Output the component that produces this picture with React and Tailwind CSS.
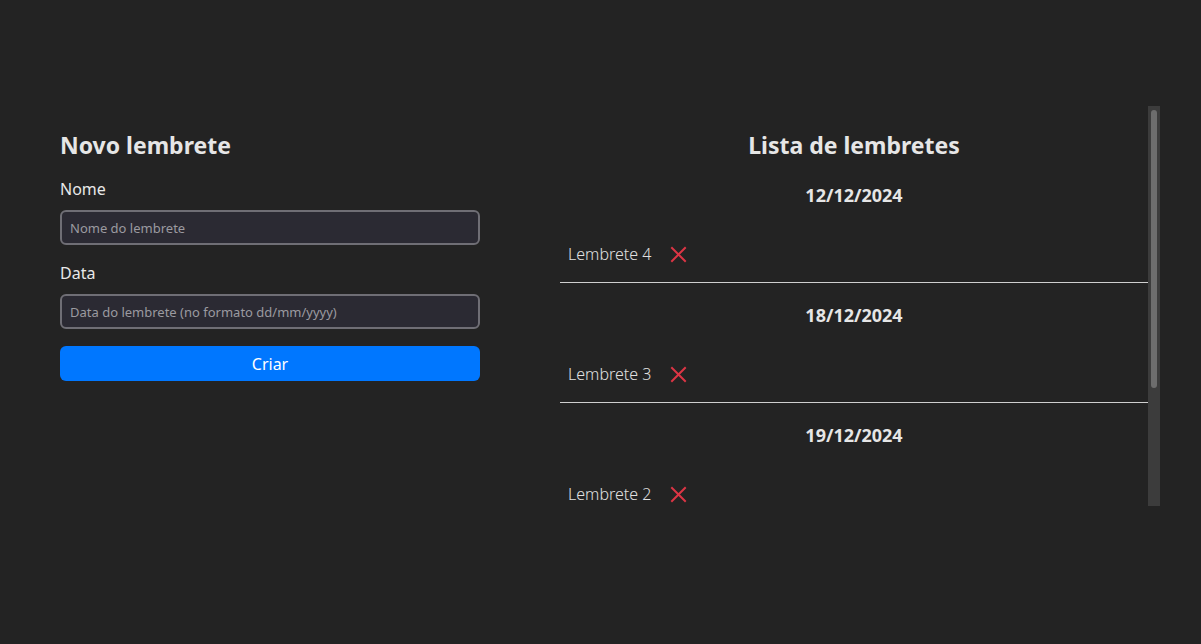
import React, { useState } from 'react';

const fontStack = { fontFamily: '"Noto Sans", "Open Sans", sans-serif' };

const initial = [
  { id: 4, name: 'Lembrete 4', date: '12/12/2024' },
  { id: 3, name: 'Lembrete 3', date: '18/12/2024' },
  { id: 2, name: 'Lembrete 2', date: '19/12/2024' },
];

const XIcon = () => (
  <svg width="17" height="17" viewBox="0 0 17 17" fill="none" stroke="#dc3545" strokeWidth="2" strokeLinecap="square">
    <path d="M2 2 L15 15 M15 2 L2 15" />
  </svg>
);

const App = () => {
  const [reminders, setReminders] = useState(initial);
  const [name, setName] = useState('');
  const [date, setDate] = useState('');

  const removeReminder = (id) => setReminders(reminders.filter((r) => r.id !== id));

  const createReminder = () => {
    if (!name || !date) return;
    setReminders([...reminders, { id: Date.now(), name, date }]);
    setName('');
    setDate('');
  };

  return (
    <div className="min-h-screen w-full bg-[#232323] text-[#e8e8e8] flex gap-[80px] pl-[60px] pt-[106px]" style={fontStack}>
      {/* Form */}
      <div className="w-[420px] shrink-0 flex flex-col">
        <h2 className="mt-[23px] text-[23px] leading-[32px] font-bold text-[#e6e6e6]">Novo lembrete</h2>
        <label className="mt-[16px] text-[16px] leading-[24px]">Nome</label>
        <input
          value={name}
          onChange={(e) => setName(e.target.value)}
          placeholder="Nome do lembrete"
          className="mt-[9px] h-[35px] w-full rounded-[6px] border-2 border-[#6f6e75] bg-[#2b2a33] px-[8px] text-[13px] text-[#e8e8e8] placeholder:text-[#9b9aa0] outline-none"
        />
        <label className="mt-[16px] text-[16px] leading-[24px]">Data</label>
        <input
          value={date}
          onChange={(e) => setDate(e.target.value)}
          placeholder="Data do lembrete (no formato dd/mm/yyyy)"
          className="mt-[9px] h-[35px] w-full rounded-[6px] border-2 border-[#6f6e75] bg-[#2b2a33] px-[8px] text-[13px] text-[#e8e8e8] placeholder:text-[#9b9aa0] outline-none"
        />
        <button
          onClick={createReminder}
          className="mt-[17px] h-[35px] w-full rounded-[6px] bg-[#0077ff] text-white text-[16px]"
        >
          Criar
        </button>
      </div>

      {/* List */}
      <div className="flex shrink-0 h-[400px]">
        <div className="w-[588px] h-full overflow-y-auto [scrollbar-width:none]">
          <h2 className="mt-[23px] text-center text-[23px] leading-[32px] font-bold text-[#e6e6e6]">Lista de lembretes</h2>
          {reminders.map((r, i) => (
            <div key={r.id} className={i === reminders.length - 1 ? 'pb-[40px]' : 'border-b border-[#cfcfcf]'}>
              <p className={`${i === 0 ? 'pt-[20px]' : 'pt-[18px]'} text-center text-[18px] leading-[28px] font-bold text-[#e6e6e6]`}>{r.date}</p>
              <div className="mt-[33px] mb-[16px] flex items-center gap-[19px] pl-[8px]">
                <span className="text-[16px] leading-[24px] font-light text-[#e0e0e0]">{r.name}</span>
                <button onClick={() => removeReminder(r.id)} className="flex items-center">
                  <XIcon />
                </button>
              </div>
            </div>
          ))}
        </div>
        {/* scrollbar */}
        <div className="w-[12px] h-full bg-[#3c3c3c] pt-[4px] px-[3px]">
          <div className="h-[278px] w-full rounded-full bg-[#6d6d6d]" />
        </div>
      </div>
    </div>
  );
};

export default App;
